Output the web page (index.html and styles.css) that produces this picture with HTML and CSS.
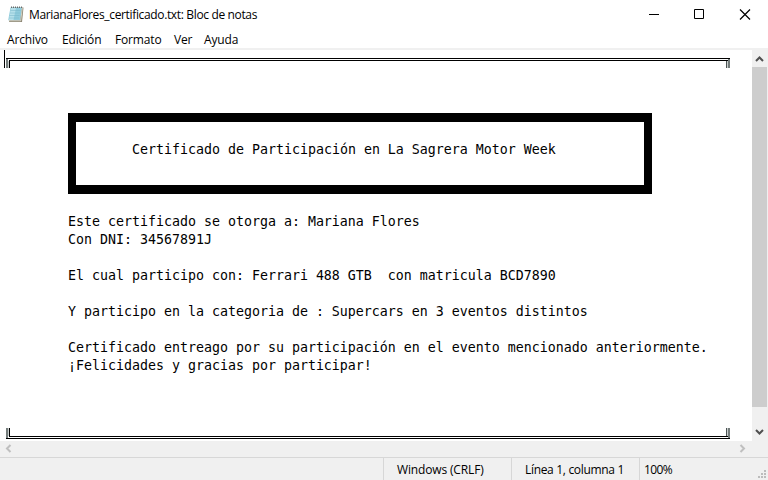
FILE: index.html
```html
<!DOCTYPE html>
<html lang="es">
<head>
<meta charset="utf-8">
<title>MarianaFlores_certificado.txt: Bloc de notas</title>
<link rel="stylesheet" href="styles.css">
</head>
<body>
<div class="window">
  <header class="titlebar">
    <svg class="app-icon" width="18" height="18" viewBox="0 0 18 18">
      <path d="M4 2.5h12.5L15 17H2z" fill="#8b8573"/>
      <path d="M3.5 2.5h11.500L13.200 15.200H1.200z" fill="#8fcbdc"/>
      <path d="M4 3h5L6.500 15H1.800z" fill="#b5e0ea"/>
      <path d="M3.500 5.500h10M3 8h10M2.500 10.500h10M2 13h10" stroke="#74b4c9" stroke-width=".5"/>
      <path d="M4 2.200h12" stroke="#646b6d" stroke-width="1.500" stroke-dasharray="1 1"/>
      <path d="M15.300 3L13.700 15.800H2" fill="none" stroke="#e9e5d5" stroke-width=".8"/>
    </svg>
    <h1 class="title">MarianaFlores_certificado.txt: Bloc de notas</h1>
    <div class="controls">
      <svg width="46" height="28" viewBox="0 0 46 28"><path d="M19 14.500h10"/></svg>
      <svg width="46" height="28" viewBox="0 0 46 28"><path d="M18.500 9.500h9v9h-9z"/></svg>
      <svg width="46" height="28" viewBox="0 0 46 28"><path d="M18 9.500l10 10M28 9.500l-10 10" stroke-width="1.200"/></svg>
    </div>
  </header>
  <nav class="menu">
    <span class="m-archivo">Archivo</span><span class="m-edicion">Edición</span><span class="m-formato">Formato</span><span class="m-ver">Ver</span><span class="m-ayuda">Ayuda</span>
  </nav>
  <main class="editor">
    <div class="page">
      <svg class="rule" width="728" height="18" viewBox="0 0 728 18" shape-rendering="crispEdges">
        <path d="M2 9h2v9H2zM724 9h2v9h-2z" fill="#747c7b"/>
        <path d="M4 11h1v7H4zM723 11h1v7h-1z" fill="#c9cecd"/>
        <path d="M722 11h1v7h-1z" fill="#4c5454"/>
        <path d="M0 0h1v18H0zM2 8h724v1H2zM5 10h719v1H5zM5 10h1v8H5z" fill="#000"/>
      </svg>
      <div class="banner"><p>Certificado de Participación en La Sagrera Motor Week</p></div>
      <pre class="text">Este certificado se otorga a: Mariana Flores
Con DNI: 34567891J

El cual participo con: Ferrari 488 GTB  con matricula BCD7890

Y participo en la categoria de : Supercars en 3 eventos distintos

Certificado entreago por su participación en el evento mencionado anteriormente.
¡Felicidades y gracias por participar!</pre>
      <svg class="rule rule-end" width="728" height="13" viewBox="0 0 728 13" shape-rendering="crispEdges">
        <path d="M2 0h2v10H2zM724 0h2v10h-2z" fill="#747c7b"/>
        <path d="M4 0h1v8H4zM723 0h1v8h-1z" fill="#c9cecd"/>
        <path d="M722 0h1v8h-1z" fill="#4c5454"/>
        <path d="M5 8h719v1H5zM2 10h724v1H2zM5 0h1v8H5z" fill="#000"/>
      </svg>
    </div>
    <div class="vscroll">
      <svg width="16" height="17" viewBox="0 0 16 17"><path d="M4 11l3.500-3.500L11 11"/></svg>
      <div class="thumb"></div>
      <svg class="down" width="16" height="17" viewBox="0 0 16 17"><path d="M4 6l3.500 3.500L11 6"/></svg>
    </div>
  </main>
  <div class="hscroll">
    <svg width="16" height="16" viewBox="0 0 16 16"><path d="M10.500 4L7 7.500l3.500 3.500"/></svg>
    <svg width="16" height="16" viewBox="0 0 16 16"><path d="M5.500 4L9 7.500 5.500 11"/></svg>
  </div>
  <footer class="status">
    <span class="cell encoding"><span>Windows (CRLF)</span></span>
    <span class="cell position"><span>Línea 1, columna 1</span></span>
    <span class="cell percent"><span>100%</span></span>
    <svg class="grip" width="10" height="10" viewBox="0 0 10 10" fill="#bcbcbc"><path d="M7 0h2v2H7zM4 3h2v2H4zM7 3h2v2H7zM1 6h2v2H1zM4 6h2v2H4zM7 6h2v2H7z"/></svg>
  </footer>
</div>
</body>
</html>
```
FILE: styles.css
```css
* { box-sizing: border-box; }
body { margin: 0; background: #fff; color: #000; font: 12px/18px "Open Sans", "Noto Sans", sans-serif; }
svg { display: block; flex: none; }
.window { width: 768px; height: 480px; display: flex; flex-direction: column; overflow: hidden; }

.titlebar { height: 30px; display: flex; align-items: flex-start; padding-left: 7px; }
.app-icon { margin: 5px 4px 0 0; }
.title { margin: 6px 0 0; font-size: 12px; font-weight: 400; letter-spacing: -0.35px; white-space: nowrap; }
.controls { display: flex; margin-left: auto; }
.controls svg { fill: none; stroke: #000; stroke-width: 1; }

.menu { height: 20px; display: flex; padding: 1px 0 0 7px; border-bottom: 2px solid #f0f0f0; white-space: nowrap; letter-spacing: -0.15px; }
.m-archivo { width: 55px; }
.m-edicion { width: 53px; }
.m-formato { width: 59px; }
.m-ver { width: 30px; }

.editor { height: 391px; display: flex; }
.page { width: 752px; padding-left: 4px; display: flex; flex-direction: column; }
.banner { width: 584px; height: 81px; margin: 45px 0 0 64px; border: solid #000; border-width: 9px 8px; padding: 19px 0 0 56px; }
.banner p, .text { margin: 0; font: 13.29px/18px "DejaVu Sans Mono", monospace; white-space: pre; }
.text { margin: 19px 0 0 64px; }
.rule-end { margin-top: auto; }

.vscroll { width: 16px; background: #f0f0f0; display: flex; flex-direction: column; }
.vscroll svg { fill: none; stroke: #505050; stroke-width: 2; }
.thumb { width: 15px; height: 340px; background: #cdcdcd; }
.down { margin-top: auto; }
.hscroll { height: 16px; background: #f0f0f0; display: flex; justify-content: space-between; padding-right: 17px; }
.hscroll svg { fill: none; stroke: #bfbfbf; stroke-width: 2; }

.status { height: 23px; background: #f0f0f0; border-top: 1px solid #d7d7d7; display: flex; padding-left: 383px; white-space: nowrap; }
.cell { border-left: 1px solid #d7d7d7; height: 22px; padding-top: 3px; }
.encoding { width: 128px; padding-left: 13px; letter-spacing: -0.15px; }
.position { width: 128px; padding-left: 13px; letter-spacing: -0.32px; }
.percent { padding-left: 4px; letter-spacing: -0.6px; }
.grip { margin: 12px 1px 0 auto; }
```
